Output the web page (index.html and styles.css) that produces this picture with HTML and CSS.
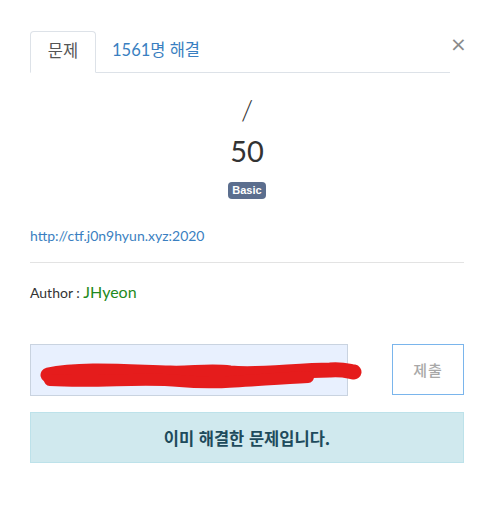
FILE: index.html
```html
<!DOCTYPE html>
<html lang="ko">
<head>
<meta charset="utf-8">
<link rel="stylesheet" href="styles.css">
</head>
<body>
<div class="modal">
  <div class="head">
    <ul class="tabs">
      <li class="tab active">문제</li>
      <li class="tab link">1561명 해결</li>
    </ul>
    <span class="close">×</span>
  </div>
  <div class="center">
    <div class="slash">/</div>
    <div class="value">50</div>
    <span class="badge">Basic</span>
  </div>
  <a class="url" href="#">http://ctf.j0n9hyun.xyz:2020</a>
  <hr class="rule">
  <p class="author">Author : <span class="name">JHyeon</span></p>
  <form class="submit">
    <div class="field">
      <input class="input" type="text" value="">
      <svg class="scribble" width="330" height="40" viewBox="0 0 330 40">
        <path d="M8 20 C40 13 90 17 130 18 C150 19 170 15 190 18 C220 21 255 15 290 15 C302 14 308 16 314 17" fill="none" stroke="#e51c1c" stroke-width="15" stroke-linecap="round"/>
        <path d="M10 25 C60 28 100 22 140 26 C180 30 220 24 268 22" fill="none" stroke="#e51c1c" stroke-width="12" stroke-linecap="round"/>
      </svg>
    </div>
    <button class="btn" type="button">제출</button>
  </form>
  <div class="alert">이미 해결한 문제입니다.</div>
</div>
</body>
</html>
```
FILE: styles.css
```css
html, body {
  margin: 0;
  padding: 0;
  background: #fff;
}
body {
  font-family: Lato, "Noto Sans CJK KR", sans-serif;
  color: #333;
  font-size: 14px;
}
.modal {
  padding: 31px 30px 0 30px;
  width: 434px;
}
.head {
  display: flex;
  align-items: flex-start;
}
.tabs {
  list-style: none;
  margin: 0;
  padding: 0;
  display: flex;
  width: 420px;
  flex-shrink: 0;
  border-bottom: 1px solid #dde2e8;
  height: 41px;
}
.tab {
  font-size: 16.5px;
  line-height: 20px;
}
.tab.active {
  width: 66px;
  box-sizing: border-box;
  border: 1px solid #dde2e8;
  border-bottom-color: #fff;
  border-radius: 4px 4px 0 0;
  background: #fff;
  color: #555;
  height: 42px;
  text-align: center;
  padding: 9px 0 0 0;
}
.tab.link {
  color: #3a7fc1;
  padding: 9px 0 0 16px;
}
.close {
  margin-left: auto;
  margin-right: 1px;
  margin-top: 2px;
  font-size: 20px;
  line-height: 22px;
  color: #8a8a8a;
  font-weight: 400;
  font-family: "DejaVu Sans", sans-serif;
}
.center {
  display: flex;
  flex-direction: column;
  align-items: center;
}
.slash {
  font-size: 28px;
  line-height: 34px;
  margin-top: 19px;
  color: #333;
  font-weight: 300;
}
.value {
  font-size: 29px;
  line-height: 36px;
  margin-top: 7px;
  color: #333;
}
.badge {
  margin-top: 13px;
  background: #5b6e8e;
  color: #fff;
  font-weight: 700;
  font-size: 11px;
  line-height: 17px;
  padding: 0 4px;
  border-radius: 4px;
  font-family: "Liberation Sans", sans-serif;
}
.url {
  display: block;
  margin-top: 28px;
  color: #3a7fc1;
  text-decoration: none;
  font-size: 14px;
  line-height: 18px;
}
.rule {
  border: 0;
  border-top: 1px solid #e3e3e3;
  margin: 17px 0 0 0;
}
.author {
  margin: 20px 0 0 0;
  font-size: 14px;
  line-height: 18px;
}
.name {
  color: #1f8a20;
  font-size: 16px;
}
.submit {
  display: flex;
  justify-content: space-between;
  margin-top: 42px;
}
.field {
  position: relative;
  width: 318px;
  height: 52px;
}
.input {
  width: 318px;
  height: 52px;
  box-sizing: border-box;
  background: #e8f0fe;
  border: 1px solid #c9d3e0;
  margin: 0;
  display: block;
}
.scribble {
  position: absolute;
  left: 10px;
  top: 11px;
}
.btn {
  width: 72px;
  height: 51px;
  background: #fff;
  border: 1px solid #7ab5ec;
  color: #a8a8a8;
  font-size: 15px;
  font-family: "Noto Sans CJK KR", sans-serif;
  font-weight: 500;
  letter-spacing: 1px;
}
.alert {
  margin-top: 16px;
  height: 51px;
  box-sizing: border-box;
  background: #d0e9ee;
  border: 1px solid #bde2ea;
  color: #1e4b5c;
  font-weight: 700;
  font-size: 16.5px;
  font-family: "Noto Sans CJK KR", sans-serif;
  display: flex;
  align-items: center;
  justify-content: center;
}
```
